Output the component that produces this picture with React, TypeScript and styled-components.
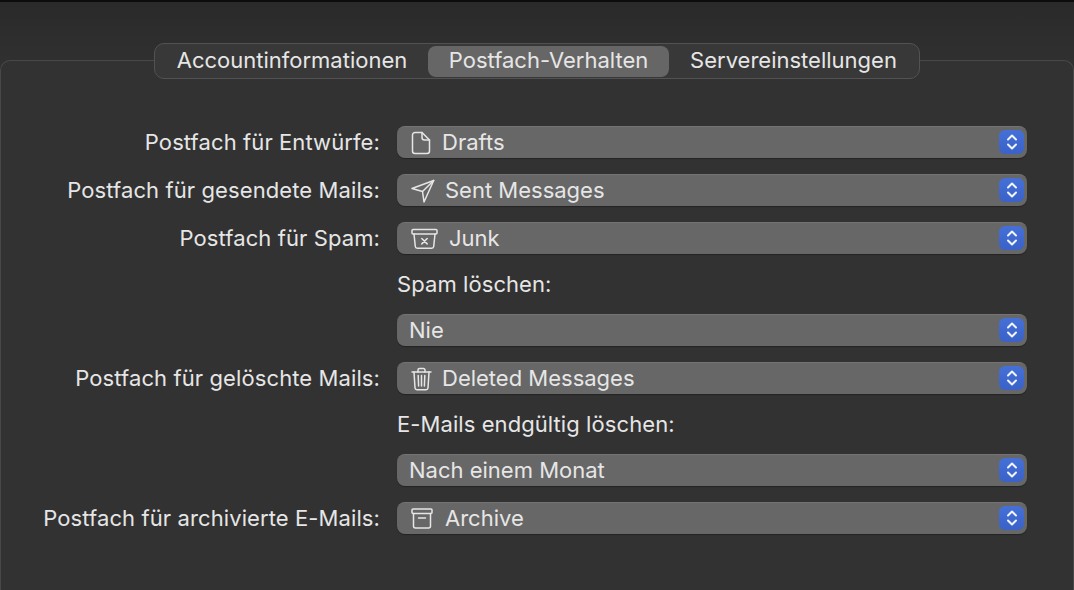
import styled, { createGlobalStyle } from 'styled-components';
import type { ReactNode } from 'react';

const GlobalStyle = createGlobalStyle`
    html, body {
        margin: 0;
        padding: 0;
        background: #2d2d2d;
    }
    #root {
        height: 590px;
        overflow: hidden;
    }
`;

const Window = styled.div`
    box-sizing: border-box;
    width: 1074px;
    height: 590px;
    overflow: hidden;
    padding-top: 43px;
    border-top: 2px solid #0c0c0c;
    background: linear-gradient(#2a2a2a, #303030 60px);
    font-family: Inter, "Liberation Sans", sans-serif;
    font-size: 22px;
    color: #e6e6e6;
`;

const TabBar = styled.div`
    position: relative;
    z-index: 1;
    box-sizing: border-box;
    display: flex;
    align-items: center;
    width: 766px;
    height: 36px;
    margin: -2px 0 -19px 154px;
    padding: 0 1px;
    border: 1px solid #525252;
    border-radius: 10px;
    background: #383838;
`;

const Tab = styled.div<{ $active?: boolean; $width: number }>`
    box-sizing: border-box;
    display: flex;
    align-items: center;
    justify-content: center;
    flex: none;
    width: ${p => p.$width}px;
    height: 31px;
    padding-bottom: 2px;
    border-radius: 8px;
    background: ${p => (p.$active ? '#666666' : 'transparent')};
    white-space: nowrap;
`;

const Panel = styled.div`
    box-sizing: border-box;
    width: 1074px;
    height: 540px;
    padding-top: 65px;
    border: 1px solid #484848;
    border-bottom: none;
    border-radius: 10px 10px 0 0;
    background: #323232;
`;

const Form = styled.div`
    display: grid;
    grid-template-columns: 379px 630px;
    column-gap: 17px;
    row-gap: 16px;
    align-items: center;
`;

const Label = styled.div`
    grid-column: 1;
    text-align: right;
    letter-spacing: 0.1px;
    white-space: nowrap;
`;

const SubLabel = styled.div`
    grid-column: 2;
    height: 28px;
    line-height: 28px;
    letter-spacing: 0.08px;
    white-space: nowrap;
`;

const Select = styled.div`
    grid-column: 2;
    box-sizing: border-box;
    display: flex;
    align-items: center;
    height: 32px;
    padding: 0 3px 0 12px;
    border-radius: 8px;
    background: #676767;
    border-top: 1px solid #747474;
    box-shadow: 0 1px 1px rgba(0, 0, 0, 0.3);
`;

const IconSlot = styled.span<{ $width: number }>`
    display: flex;
    align-items: center;
    flex: none;
    width: ${p => p.$width}px;
    margin-left: 2px;
`;

const Value = styled.span`
    flex: 1;
    padding-bottom: 2px;
    white-space: nowrap;
`;

const Stepper = styled.span`
    display: flex;
    align-items: center;
    justify-content: center;
    flex: none;
    width: 25px;
    height: 24px;
    margin-top: -1px;
    border-radius: 6px;
    background: linear-gradient(#4470d8, #3a62c8);
`;

const stroke = {
    fill: 'none',
    stroke: '#e6e6e6',
    strokeWidth: 1.5,
    strokeLinecap: 'round' as const,
    strokeLinejoin: 'round' as const,
};

const DraftIcon = () => (
    <svg width="20" height="24" viewBox="0 0 20 24" {...stroke}>
        <path d="M4 1.5h7l7.5 7.5v11a2.5 2.5 0 0 1-2.5 2.5H4A2.5 2.5 0 0 1 1.5 20V4A2.5 2.5 0 0 1 4 1.5z" />
        <path d="M11 1.5v5a2.5 2.5 0 0 0 2.5 2.5h5" />
    </svg>
);

const SentIcon = () => (
    <svg width="24" height="24" viewBox="0 0 24 24" {...stroke}>
        <path d="M22.7 1.5L1 9.5l10.5 3L13 23z" />
        <path d="M11.5 12.5L22.7 1.5" />
    </svg>
);

const JunkIcon = () => (
    <svg width="27" height="22" viewBox="0 0 27 22" {...stroke}>
        <rect x="1" y="1.5" width="25" height="4.5" rx="1" />
        <path d="M3 6l1.3 12.5a2 2 0 0 0 2 1.8h14.4a2 2 0 0 0 2-1.8L24 6" />
        <path d="M10.8 10.5l5.4 5.4M16.2 10.5l-5.4 5.4" />
    </svg>
);

const TrashIcon = () => (
    <svg width="21" height="24" viewBox="0 0 21 24" {...stroke}>
        <path d="M1 5h19" />
        <path d="M7 5V3a1.5 1.5 0 0 1 1.5-1.5h4A1.5 1.5 0 0 1 14 3v2" />
        <path d="M3 5l1 16a2 2 0 0 0 2 1.8h9a2 2 0 0 0 2-1.8l1-16" />
        <path d="M7.2 8.5l.4 10.5M10.5 8.5V19M13.8 8.5l-.4 10.5" />
    </svg>
);

const ArchiveIcon = () => (
    <svg width="22" height="21" viewBox="0 0 22 21" {...stroke}>
        <rect x="1" y="1" width="20" height="4.5" rx="1" />
        <path d="M2.5 5.5V18a2 2 0 0 0 2 2h13a2 2 0 0 0 2-2V5.5" />
        <path d="M7.5 10h7" />
    </svg>
);

const Chevrons = () => (
    <svg width="12" height="18" viewBox="0 0 12 18" fill="none" stroke="#f2f4fb" strokeWidth="2" strokeLinecap="round" strokeLinejoin="round">
        <path d="M2 6.5L6 2.5l4 4" />
        <path d="M2 11.5l4 4 4-4" />
    </svg>
);

function PopUp({ icon, width = 0, children }: { icon?: ReactNode; width?: number; children: ReactNode }) {
    return (
        <Select>
            {icon && <IconSlot $width={width}>{icon}</IconSlot>}
            <Value>{children}</Value>
            <Stepper>
                <Chevrons />
            </Stepper>
        </Select>
    );
}

export default function App() {
    return (
        <>
            <GlobalStyle />
            <Window>
                <TabBar>
                    <Tab $width={272}>Accountinformationen</Tab>
                    <Tab $width={241} $active>Postfach-Verhalten</Tab>
                    <Tab $width={249}>Servereinstellungen</Tab>
                </TabBar>
                <Panel>
                    <Form>
                        <Label>Postfach für Entwürfe:</Label>
                        <PopUp icon={<DraftIcon />} width={31}>Drafts</PopUp>
                        <Label>Postfach für gesendete Mails:</Label>
                        <PopUp icon={<SentIcon />} width={34}>Sent Messages</PopUp>
                        <Label>Postfach für Spam:</Label>
                        <PopUp icon={<JunkIcon />} width={38}>Junk</PopUp>
                        <SubLabel>Spam löschen:</SubLabel>
                        <PopUp>Nie</PopUp>
                        <Label>Postfach für gelöschte Mails:</Label>
                        <PopUp icon={<TrashIcon />} width={31}>Deleted Messages</PopUp>
                        <SubLabel>E-Mails endgültig löschen:</SubLabel>
                        <PopUp>Nach einem Monat</PopUp>
                        <Label>Postfach für archivierte E-Mails:</Label>
                        <PopUp icon={<ArchiveIcon />} width={34}>Archive</PopUp>
                    </Form>
                </Panel>
            </Window>
        </>
    );
}
